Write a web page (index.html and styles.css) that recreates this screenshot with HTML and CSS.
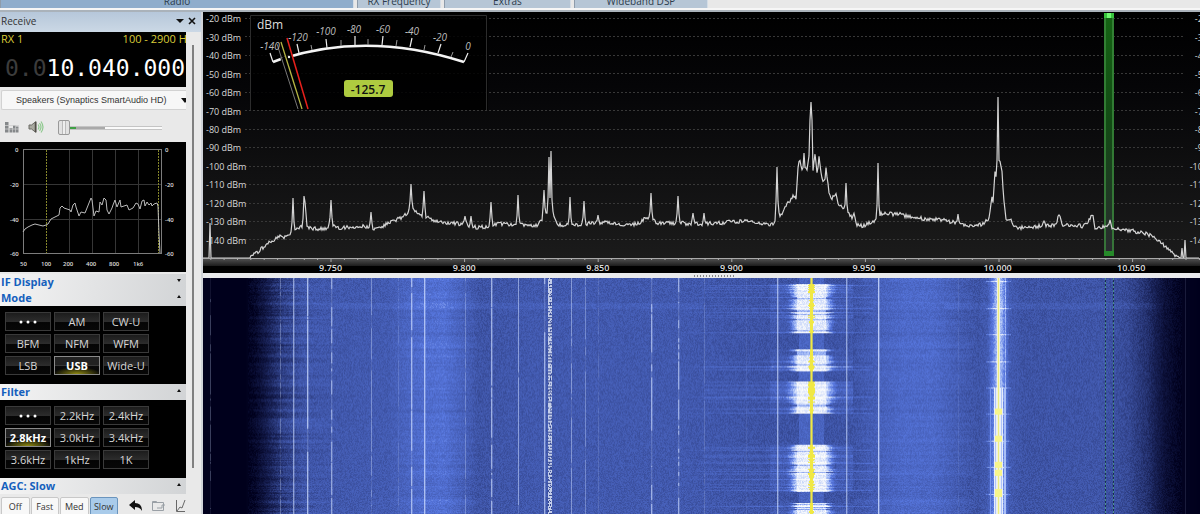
FILE: index.html
```html
<!DOCTYPE html>
<html lang="en">
<head>
<meta charset="utf-8">
<title>SDR Receiver</title>
<link rel="stylesheet" href="styles.css">
</head>
<body>
<div class="app">
  <nav class="ribbon">
    <span class="group group-radio">Radio</span>
    <span class="group group-freq">RX Frequency</span>
    <span class="group group-extras">Extras</span>
    <span class="group group-dsp">Wideband DSP</span>
  </nav>
  <div class="workspace">
    <aside class="sidebar">
      <header class="panel-title">
        <span>Receive</span>
        <svg class="title-icons" width="22" height="10" viewBox="0 0 22 10"><path d="M1 3h8L5 7z" fill="#111"/><path d="M14 2l6 6M20 2l-6 6" stroke="#111" stroke-width="1.6"/></svg>
      </header>
      <div class="panel">
        <section class="vfo">
          <div class="vfo-info"><span>RX 1</span><span class="passband">100 - 2900 Hz</span></div>
          <div class="vfo-digits"><span class="dim">0.0</span>10.040.000</div>
        </section>
        <div class="device">
          <select class="device-select" aria-label="Output device"><option>Speakers (Synaptics SmartAudio HD)</option></select>
          <svg class="device-arrow" width="5" height="5" viewBox="0 0 5 5"><path d="M0 0h8L4 5z" fill="#111"/></svg>
        </div>
        <div class="volume">
          <svg width="14" height="12" viewBox="0 0 14 12" fill="#85888a"><path d="M0 1h3.500v10.500H0zM4.500 7h3v4.500h-3zM8 4h2.500v7.500H8zM11 5.500h2.500v6H11z"/><path d="M0 4.500h14M0 8h14" stroke="#cfcfcf" stroke-width=".8"/></svg>
          <svg width="16" height="14" viewBox="0 0 16 14" fill="none"><path d="M1 5h2.500L8 1.500v11L3.500 9H1z" fill="#a9a9a0" stroke="#6c6c66"/><path d="M7.500 2v10" stroke="#514e48" stroke-width="1.500"/><path d="M10 4.500q2 2.500 0 5M11.500 3q3 4 0 8M13 1.500q4 5.500 0 11" stroke="#8fc98f" stroke-width="1.200"/></svg>
          <input class="volume-slider" type="range" aria-label="Volume" min="0" max="100" value="0">
        </div>
        <svg class="audio" width="186" height="130" viewBox="0 0 186 130">
          <rect width="186" height="130" fill="#000"/>
          <path d="M69.500 7v104M92.500 7v104M115.500 7v104M138.500 7v104M23 42.500h138M23 77.500h138" stroke="#363636" fill="none"/>
          <rect x="23.500" y="7.500" width="138" height="104" fill="none" stroke="#7c7c7c"/>
          <path d="M46.500 8v103M158.500 8v103" stroke="#85862a" stroke-dasharray="2 1"/>
          <path d="M23 90L25 87 28 85 32 83 35 82 39 83 43 84 46 83 48 82 51 77 53 76 57 74 59 73 60 66 62 64 64 66 67 67 70 68 71 70 73 63 75 61 76 65 79 74 81 70 85 71 87 66 89 61 91 56 92 58 94 74 96 69 99 70 100 60 102 63 104 56 106 58 107 68 109 72 112 66 113 63 115 58 117 65 120 58 121 65 127 63 129 68 133 66 136 61 138 62 140 67 142 59 144 58 145 64 147 60 149 63 151 61 152 64 154 62 157 61 158 64 159 92 160 111" fill="none" stroke="#bbb"/>
          <g class="audio-labels">
            <text x="15" y="10">0</text><text x="10" y="45">-20</text><text x="10" y="80">-40</text><text x="10" y="114">-60</text>
            <text x="165" y="10">0</text><text x="165" y="45">-20</text><text x="165" y="80">-40</text><text x="165" y="114">-60</text>
            <text x="20" y="124">50</text><text x="41" y="124">100</text><text x="63" y="124">200</text><text x="86" y="124">400</text><text x="109" y="124">800</text><text x="133" y="124">1k6</text>
          </g>
        </svg>
        <h2 class="section closed">IF Display</h2>
        <h2 class="section">Mode</h2>
        <div class="keys">
          <button class="key" aria-label="More modes"><svg class="dots" width="18" height="4" viewBox="0 0 18 4" fill="#fff"><circle cx="2" cy="2" r="1.500"/><circle cx="9" cy="2" r="1.500"/><circle cx="16" cy="2" r="1.500"/></svg></button><button class="key">AM</button><button class="key">CW-U</button>
          <button class="key">BFM</button><button class="key">NFM</button><button class="key">WFM</button>
          <button class="key">LSB</button><button class="key on">USB</button><button class="key">Wide-U</button>
        </div>
        <h2 class="section">Filter</h2>
        <div class="keys">
          <button class="key" aria-label="More filters"><svg class="dots" width="18" height="4" viewBox="0 0 18 4" fill="#fff"><circle cx="2" cy="2" r="1.500"/><circle cx="9" cy="2" r="1.500"/><circle cx="16" cy="2" r="1.500"/></svg></button><button class="key">2.2kHz</button><button class="key">2.4kHz</button>
          <button class="key on">2.8kHz</button><button class="key">3.0kHz</button><button class="key">3.4kHz</button>
          <button class="key">3.6kHz</button><button class="key">1kHz</button><button class="key">1K</button>
        </div>
        <h2 class="section">AGC: Slow</h2>
        <div class="agc">
          <button class="agc-btn">Off</button><button class="agc-btn">Fast</button><button class="agc-btn">Med</button><button class="agc-btn active">Slow</button>
          <svg class="agc-icons" width="58" height="16" viewBox="0 0 58 16" fill="none"><path d="M1 7l6-5v3q7 0 7 8-2-4-7-4v3z" fill="#111"/><path d="M24.500 4.500v8h11v-8zM24.500 5v-1.500h4l1 1.500M29 10h5V7h3" stroke="#9aa0a6"/><path d="M48.500 2v11.500H57M49 13l3-4 2 1 3-8" stroke="#686868"/></svg>
        </div>
      </div>
    </aside>
    <main class="display">
      <section class="spectrum">
        <svg class="plot" viewBox="0 0 997 261" preserveAspectRatio="none">
          <defs>
            <linearGradient id="bg" x2="0" y2="1"><stop offset="0" stop-color="#000"/><stop offset=".3" stop-color="#050507"/><stop offset="1" stop-color="#1b1b1b"/></linearGradient>
            <linearGradient id="axis" x2="0" y2="1"><stop offset="0" stop-color="#555"/><stop offset="1" stop-color="#1c1c1c"/></linearGradient>
            <linearGradient id="band" x2="0" y2="1"><stop offset="0" stop-color="#156414"/><stop offset=".45" stop-color="#124a14"/><stop offset="1" stop-color="#2a2a30"/></linearGradient>
          </defs>
          <rect width="997" height="246" fill="url(#bg)"/>
          <g id="grid"></g>
          <rect x="901" y="1" width="10" height="243" fill="url(#band)"/>
          <path d="M902 1v243M910 1v243" stroke="#3c8c3e" stroke-width="1.500"/>
          <rect x="901" y="1" width="10" height="5" fill="#38c43c"/><rect x="904" y="1" width="4" height="5" fill="#70f870"/>
          <rect x="901" y="239" width="10" height="5" fill="#268a2a"/>
          <path id="trace" fill="none" stroke="#d4d4d4" stroke-width="1.200"/>
          <rect y="246" width="997" height="8" fill="url(#axis)"/><rect y="254" width="997" height="7" fill="#000"/>
          <path id="ticks" fill="none" stroke="#aaa"/>
        </svg>
        <svg class="freqs" width="100%" height="12">
          <text x="12.8%" y="10">9.750</text><text x="26.200%" y="10">9.800</text><text x="39.600%" y="10">9.850</text><text x="53%" y="10">9.900</text><text x="66.300%" y="10">9.950</text><text x="79.700%" y="10">10.000</text><text x="93.100%" y="10">10.050</text>
        </svg>
        <ol class="levels left">
          <li>-20 dBm</li><li>-30 dBm</li><li>-40 dBm</li><li>-50 dBm</li><li>-60 dBm</li><li>-70 dBm</li><li>-80 dBm</li><li>-90 dBm</li><li>-100 dBm</li><li>-110 dBm</li><li>-120 dBm</li><li>-130 dBm</li><li>-140 dBm</li>
        </ol>
        <ol class="levels right">
          <li>-20</li><li>-30</li><li>-40</li><li>-50</li><li>-60</li><li>-70</li><li>-80</li><li>-90</li><li>-100</li><li>-110</li><li>-120</li><li>-130</li><li>-140</li>
        </ol>
        <svg class="meter" width="238" height="95" viewBox="0 0 238 95">
          <rect width="238" height="95" fill="#000" fill-opacity=".85"/>
          <path d="M.5 95V.5h236V95" fill="none" stroke="#2c2c2c"/>
          <path d="M31 44Q118 16 214 47M23 47l8-3" fill="none" stroke="#f4f4f4" stroke-width="2.500"/>
          <path d="M31 45L43 41" stroke="#000" stroke-width="4"/><circle cx="39" cy="42" r="1.200" fill="#eee"/>
          <path d="M23 47l-3-9M214 47l4-9M49 38l-2-9M77 33l-1-9M105 30v-9M132 30l1-9M160 32l2-9M188 38l3-9" stroke="#eee" stroke-width="1.200"/>
          <path d="M62 35l-1-5M91 31v-6M118 30v-6M146 31l1-6M174 35l1-5M201 42l2-5" stroke="#999"/>
          <path d="M27 29L48 94" stroke="#777"/><path d="M31 27L52 94" stroke="#b5b544" stroke-width="1.300"/><path d="M37 23L58 94" stroke="#e8201c" stroke-width="1.500"/>
          <text class="meter-unit" x="7" y="14">dBm</text>
          <g class="meter-scale"><text x="20" y="35">-140</text><text x="48" y="26">-120</text><text x="76" y="20">-100</text><text x="104" y="18">-80</text><text x="133" y="18">-60</text><text x="162" y="20">-40</text><text x="190" y="26">-20</text><text x="218" y="35">0</text></g>
          <rect x="94" y="65" width="49" height="17" rx="3" fill="#aecb40"/>
          <text class="meter-value" x="118" y="79">-125.7</text>
        </svg>
      </section>
      <div class="splitter"></div>
      <canvas class="waterfall" id="waterfall" width="997" height="235"></canvas>
    </main>
  </div>
</div>
<script src="app.js"></script>
</body>
</html>
```

FILE: styles.css
```css
* { box-sizing: border-box; }
body { margin: 0; overflow: hidden; background: #e8e8e8; font-family: "Open Sans", "Noto Sans", sans-serif; font-size: 11px; color: #333; }
h2, ol { margin: 0; padding: 0; }
ol { list-style: none; }
svg { display: block; flex: none; }
button { font-family: inherit; padding: 0; }
.app { display: flex; flex-direction: column; height: 100vh; }

.ribbon { display: flex; gap: 3px; height: 12px; flex: none; border-bottom: 2px solid #aab2ba; background: linear-gradient(#e8e8e8 8px, #f6f6f6 8px, #f6f6f6 10px); align-items: flex-start; }
.group { display: flex; justify-content: center; align-items: flex-end; height: 8px; background: #b6c6d6; font-size: 10px; line-height: 14px; color: #2b3b4b; border-left: 1px solid #8e9cab; border-right: 1px solid #d4dde6; }
.group-radio { width: 354px; background: #8fadcc; }
.group-freq { width: 84px; }
.group-extras { width: 127px; }
.group-dsp { width: 134px; }

.workspace { display: flex; flex: 1; min-height: 0; }
.sidebar { width: 203px; flex: none; overflow: hidden; border-right: 2px solid #d0d3d8; background: linear-gradient(#808080, #808080) 192px 33px / 2px 423px no-repeat, #e9e9e9; }
.panel-title { display: flex; align-items: center; justify-content: space-between; height: 20px; padding: 0 4px 2px 1px; background: linear-gradient(#b6c7da, #cbd8e5); font-size: 10px; }
.panel { width: 186px; overflow: hidden; }

.vfo { height: 55px; background: #000; overflow: hidden; }
.vfo-info { display: flex; justify-content: space-between; height: 16px; padding-left: 1px; font-size: 11px; line-height: 14px; color: #d9cc38; }
.passband { white-space: nowrap; margin-right: -6px; }
.vfo-digits { padding-left: 5px; font: 23px/40px "DejaVu Sans Mono", monospace; color: #fff; white-space: nowrap; }
.dim { color: #3c3c3c; }

.device { display: flex; align-items: center; justify-content: space-between; height: 20px; margin: 3px 0 0 1px; border: 1px solid #d2d2d2; border-right: 0; border-radius: 2px 0 0 2px; background: #f7f7f7; }
.device-select { appearance: none; flex: 1; min-width: 0; border: 0; background: none; padding: 0 0 0 14px; font: 9px "Liberation Sans", sans-serif; color: #333; }
.volume { display: flex; align-items: center; gap: 9px; height: 32px; padding: 2px 0 0 5px; }
.volume-slider { appearance: none; width: 104px; height: 16px; margin: 0 0 0 5px; background: linear-gradient(90deg, #3fa045 18px, #a9a9a9 18px, #a9a9a9 47px, #fafafa 47px) 0 8px / 100% 2px no-repeat, linear-gradient(#c4c4c4, #c4c4c4) 0 7px / 100% 4px no-repeat; }
.volume-slider::-webkit-slider-thumb { appearance: none; width: 12px; height: 15px; border: 1px solid #999; border-radius: 2px; background: linear-gradient(90deg, #e2e2e2 3px, #bbb 3px, #bbb 4px, #eee 4px, #eee 6px, #bbb 6px, #bbb 7px, #e2e2e2 7px); }
.audio-labels { font: 6px "Open Sans", sans-serif; font-weight: 600; fill: #ddd; }

.section { display: flex; align-items: center; justify-content: space-between; height: 16px; padding: 0 5px 0 1px; background: linear-gradient(100deg, #f4f4f4, #d2d4d6); font-size: 11px; line-height: 16px; font-weight: 700; color: #1560bd; }
.section::after { content: ""; border: 2px solid transparent; border-top: 0; border-bottom: 3px solid #111; margin-bottom: 4px; }
.section.closed::after { border-bottom: 0; border-top: 3px solid #111; }
.audio + .section { margin-top: 2px; }
.keys { display: grid; grid-template-columns: repeat(3, 46px); grid-auto-rows: 19px; gap: 3px; padding: 6px 5px; height: 78px; background: #000; }
.key { border: 1px solid #3a3a3a; background: linear-gradient(#1c1c1c, #2c2c2c 50%, #050505 56%, #070707); color: #d6d6d6; font-size: 11px; line-height: 15px; }
.dots { margin: 0 auto; }
.on { border-color: #8a8a8a; color: #fff; font-weight: 700; background: radial-gradient(ellipse 24px 7px at 50% 100%, #8f8a12, transparent), linear-gradient(#222 45%, #383838 50%, #090909 56%, #070707); }
.agc { display: flex; gap: 1px; align-items: flex-start; padding: 3px 0 0 1px; }
.agc-btn { width: 29px; height: 20px; border: 1px solid #c8c8c8; border-radius: 2px; background: #f8f8f8; font-size: 9px; line-height: 16px; color: #333; }
.active { background: #a9cbea; border-color: #6a94bd; }
.agc-icons { margin: 1px 0 0 9px; }

.display { display: grid; grid-template-rows: 261px 5px 1fr; flex: 1; min-width: 0; }
.spectrum { display: grid; grid-template: 100% / 100%; overflow: hidden; min-width: 0; }
.spectrum > * { grid-area: 1 / 1; }
.plot { width: 100%; height: 261px; }
.freqs { align-self: end; font-size: 9px; font-weight: 600; fill: #ddd; text-anchor: middle; }
.levels { display: grid; grid-template-rows: repeat(13, 1fr); height: 240px; margin-top: -2px; align-items: center; font-size: 9px; line-height: 12px; color: #d8d8d8; }
.left { padding-left: 3px; }
.right { justify-self: end; width: 22px; margin-right: -8px; text-align: right; }
.meter { margin: 3px 0 0 47px; fill: #ddd; }
.meter-unit { font-size: 12px; }
.meter-scale { font-size: 10px; font-style: italic; text-anchor: middle; fill: #bbb; }
.meter-value { font-size: 12px; font-weight: 600; text-anchor: middle; fill: #111; }
.splitter { display: flex; justify-content: center; padding-left: 26px; background: #e9eaec; }
.splitter::before { content: ""; width: 41px; height: 2px; margin-top: 2px; background: repeating-linear-gradient(90deg, #888 0 1px, transparent 1px 3px); }
.waterfall { display: block; width: 100%; height: 100%; min-height: 0; }
```

FILE: app.js
```javascript
let seed = 7331;
function rnd() {
  seed = (seed * 1664525 + 1013904223) >>> 0;
  return seed / 4294967296;
}
function interp(pts, x) {
  if (x <= pts[0][0]) return pts[0][1];
  for (let i = 1; i < pts.length; i++) {
    if (x <= pts[i][0]) {
      const a = pts[i - 1], b = pts[i];
      return a[1] + (b[1] - a[1]) * (x - a[0]) / (b[0] - a[0]);
    }
  }
  return pts[pts.length - 1][1];
}

/* Spectrum: level grid, frequency ticks and trace */
let grid = "";
for (let i = 0; i < 13; i++) {
  const y = Math.round(6 + i * 18.45) + 0.5;
  grid += `<path d="M42 ${y}H981" stroke="#383838" stroke-dasharray="2 2"/>`;
}
document.getElementById("grid").innerHTML = grid;

let ticks = "M0 246.5H997";
for (let i = -9; i < 66; i++) {
  const x = 128 + i * 13.36;
  if (x > 0 && x < 997) ticks += `M${x.toFixed(1)} 246v${i % 10 === 0 ? 4 : 2}`;
}
document.getElementById("ticks").setAttribute("d", ticks);

const floor = [[47,246],[57,238],[66,230],[74,226],[84,225],[90,219],[96,215],[105,216],[122,217],[128,212],[135,216],[158,214],[170,217],[185,212],[198,206],[204,202],[208,196],[214,201],[221,204],[232,209],[247,211],[262,212],[275,216],[297,212],[317,213],[335,214],[343,200],[350,200],[354,213],[371,213],[400,210],[420,213],[435,212],[444,205],[454,211],[475,211],[500,212],[540,209],[566,212],[571,212],[575,201],[579,204],[584,191],[587,191],[590,183],[593,188],[595,155],[597,147],[600,165],[602,159],[603,156],[604,158],[606,142],[608,115],[610,158],[612,144],[614,161],[616,146],[618,160],[620,171],[622,165],[623,157],[626,180],[629,187],[631,183],[633,182],[636,194],[640,195],[643,202],[646,201],[649,206],[651,203],[654,213],[657,214],[663,213],[673,208],[678,202],[695,202],[710,206],[740,208],[765,214],[780,212],[786,207],[789,185],[790,190],[792,160],[794,170],[797,150],[799,160],[801,190],[803,207],[808,207],[811,216],[850,213],[853,212],[856,206],[860,213],[880,214],[886,209],[889,205],[892,215],[910,215],[925,218],[945,222],[958,231],[972,243],[978,246],[997,246]];
const peaks = [[7,211],[77,223],[90,186],[101,184],[102,190],[128,188],[168,200],[208,172],[221,179],[262,204],[268,204],[288,190],[315,183],[341,178],[346,145],[348,139],[367,185],[381,189],[395,203],[448,181],[475,184],[490,201],[501,201],[574,155],[601,141],[608,90],[643,171],[675,151],[755,202],[795,85],[841,209],[856,203],[889,204],[907,208],[982,228],[979,236]];
const ys = [];
for (let x = 0; x < 997; x++) {
  let y = interp(floor, x);
  if (x > 47 && x < 978) y += (rnd() - 0.5) * 4;
  y = Math.min(y, 246);
  if (x < 47) y = 246;
  ys.push(y);
}
for (const [px, py] of peaks) {
  const f = ys[px];
  ys[px] = Math.min(ys[px], py);
  const skirt = Math.min(14, (f - py) * 0.3);
  if (px > 50 && px < 970) [-1, 1].forEach(d => { ys[px + d] = Math.min(ys[px + d], f - skirt); });
}
document.getElementById("trace").setAttribute("d", "M" + ys.map((y, x) => x + " " + y.toFixed(1)).join("L"));

/* Waterfall */
const canvas = document.getElementById("waterfall");
const W = canvas.width, H = canvas.height;
const ctx = canvas.getContext("2d");
const img = ctx.createImageData(W, H);
const ramp = [[0,[0,0,28]],[0.25,[24,33,85]],[0.5,[65,88,172]],[0.7,[88,120,224]],[0.85,[175,196,248]],[1,[250,251,252]]];
function colour(v) {
  v = Math.max(0, Math.min(1, v));
  for (let i = 1; i < ramp.length; i++) {
    if (v <= ramp[i][0]) {
      const a = ramp[i - 1], b = ramp[i], t = (v - a[0]) / (b[0] - a[0]);
      return [0, 1, 2].map(k => a[1][k] + (b[1][k] - a[1][k]) * t);
    }
  }
}
const base = [[0,0],[42,0],[52,0.06],[68,0.26],[80,0.38],[100,0.49],[150,0.51],[185,0.52],[200,0.57],[218,0.63],[240,0.65],[258,0.57],[275,0.48],[330,0.51],[480,0.51],[560,0.48],[650,0.48],[672,0.55],[700,0.61],[730,0.61],[755,0.53],[775,0.48],[784,0.52],[793,0.82],[798,0.82],[806,0.52],[820,0.48],[900,0.49],[925,0.43],[945,0.31],[962,0.12],[978,0.02],[997,0]];
const rowA = [], rowB = [], rowC = [];
for (let y = 0; y < H; y++) {
  rowA.push((rnd() - 0.5) * 0.12 + (y ? rowA[y - 1] * 0.4 : 0));
  rowB.push((rnd() - 0.5) * 0.07 + (y ? rowB[y - 1] * 0.5 : 0));
  rowC.push(rnd() * 0.6 + (y ? rowC[y - 1] * 0.4 : 0.2));
}
const bursts = [[6,55],[71,93],[103,135],[166,213],[224,236]];
const streaks = [7,19,30,34,54,88,91,118,130,134,171,184,192,200,211,227];
const lines = [[7,0.14,0.5],[77,0.17,0.5],[90,0.3,1],[104,0.38,0.95],[128,0.3,0.75],[168,0.2,0.7],[195,0.09,0.5],[208,0.35,0.9],[221,0.38,1],[262,0.16,0.8],[288,0.34,0.9],[315,0.27,0.9],[341,0.34,0.95],[368,0.24,0.85],[382,0.18,0.75],[395,0.08,0.7],[448,0.33,0.75],[475,0.32,0.7],[501,0.1,0.8],[543,0.04,0.9],[574,0.34,1],[643,0.3,1],[675,0.42,1],[755,0.05,0.6],[982,0.06,1]];
for (let y = 0; y < H; y++) {
  const burst = bursts.find(b => y >= b[0] && y < b[1]);
  const streak = streaks.some(s => Math.abs(y - s) < 1);
  const gapRow = burst && rowC[y] < 0.24;
  const taper = 18 + rowC[y] * 14;
  const blob = rowC[y] > 0.62 ? 3 : rowC[y] > 0.5 ? 2 : 1;
  for (let x = 0; x < W; x++) {
    let v = interp(base, x) + (rnd() - 0.5) * 0.11 * (x < 45 || x > 978 ? 0 : 1);
    if (x > 45 && x < 135) v += rowA[y] * (1 - Math.abs(x - 78) / 60);
    if (x > 185 && x < 285) v += rowB[y] * Math.min(1, (x - 185) / 30, (285 - x) / 30);
    if (x > 650 && x < 770) v += rowB[y] * 0.7;
    if ((y > 24 && y < 31) && x > 50 && (x < 500 || x > 740) && x < 960) v += 0.04;
    const dx = Math.abs(x - 608);
    if (burst) {
      if (dx < 15) v = 0.95 + (rnd() - 0.5) * 0.1 - (gapRow ? 0.14 : 0);
      else if (dx < taper) v += (gapRow ? 0.08 : 0.4) * (1 - (dx - 15) / (taper - 14));
      else if (dx < 42) v += 0.1 * rowC[y];
    } else if (dx < 13) v += 0.1;
    if (streak && x > 477 && x < 670) v += 0.17 * (1 - dx / 145);
    if (burst && rowC[y] > 0.65 && x > 500 && x < 650) v += 0.05;
    const tick = (y + 23.4) % 26.4 < 1;
    if (tick && Math.abs(x - 795) < 13) v += 0.18;
    if (y > 108) {
      if (x === 787) v = 0.75;
      if (x >= 791 && x <= 799) v = x % 2 ? 0.96 : 0.85;
      if (x === 801 || x === 802) v = 0.84;
    } else if (x === 802) v += 0.14;
    let c = colour(v);
    if (dx <= 1 || (burst && dx <= blob)) c = dx === 0 || burst ? [240, 232, 68] : [174, 181, 116];
    const cx = Math.abs(x - 795);
    if (cx <= 1) c = cx === 0 ? [236, 236, 130] : [242, 243, 218];
    if (y > 128 && cx < 4 && (y + 2) % 26.4 < (y > 190 && y < 218 ? 14 : 6)) c = [247, 245, 140];
    const o = (y * W + x) * 4;
    img.data[o] = c[0]; img.data[o + 1] = c[1]; img.data[o + 2] = c[2]; img.data[o + 3] = 255;
  }
}
function mix(x, y, t, rgb) {
  const o = (y * W + x) * 4;
  for (let k = 0; k < 3; k++) img.data[o + k] += (rgb[k] - img.data[o + k]) * t;
}
for (const [x, gain, duty] of lines) {
  let lit = true;
  for (let y = 0; y < H; y++) {
    if (rnd() < 0.18) lit = rnd() < duty;
    mix(x, y, Math.min(1, gain * (lit ? 2 : 0.6)), [205, 220, 255]);
    if (gain > 0.29) mix(x + 1, y, gain * (lit ? 0.8 : 0.2), [190, 208, 255]);
  }
}
for (let y = 0; y < H; y++) {
  for (let x = 345; x < 349; x++) {
    const on = rnd() < 0.35 ? rnd() < 0.7 : y % 3 > 0;
    mix(x, y, on ? 0.8 : 0.35, on ? [228, 235, 248] : [30, 40, 100]);
  }
  for (const x of [902, 910]) mix(x, y, 0.85, y % 4 < 2 ? [78, 156, 136] : [16, 32, 66]);
}
ctx.putImageData(img, 0, 0);
```
